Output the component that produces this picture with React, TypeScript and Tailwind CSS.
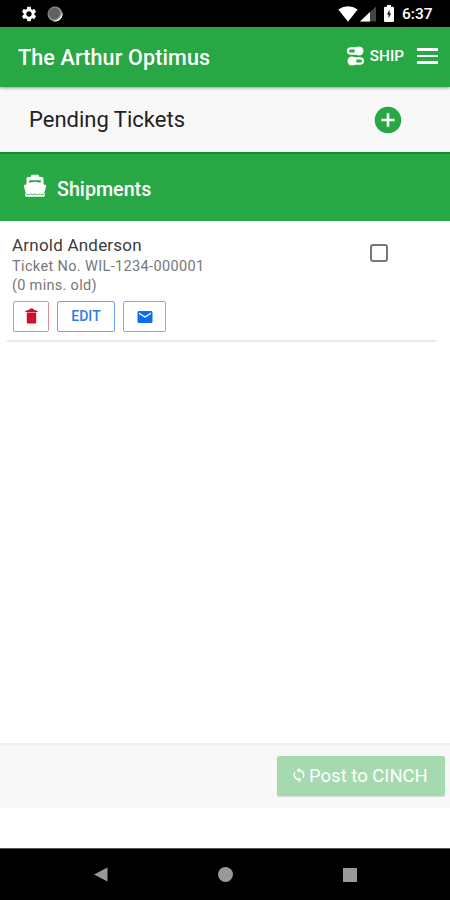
import { useState } from "react";
import { MdAddCircle, MdEmail, MdSettings } from "react-icons/md";

type Ticket = { name: string; number: string; age: string };

const tickets: Ticket[] = [
  { name: "Arnold Anderson", number: "WIL-1234-000001", age: "0 mins. old" },
];

function StatusBar() {
  return (
    <div className="h-[27px] shrink-0 bg-black text-white flex items-center pl-5 pr-[17px]">
      <MdSettings className="size-[18px]" />
      <svg className="size-4 ml-[9px]" viewBox="0 0 16 16">
        <circle cx="8" cy="8" r="7.5" fill="#8a8a8a" />
        <path d="M15.2 6A7.5 7.5 0 0 1 6 15.2Q14 14 15.2 6z" fill="#fff" />
        <circle cx="7.3" cy="7.3" r="5.6" fill="#606060" />
      </svg>
      <svg className="ml-auto w-5 h-4" viewBox="0 0 20 16">
        <path d="M.3 3.6Q10-3.2 19.7 3.6L10 15.8z" fill="#fff" />
      </svg>
      <svg className="w-4 h-4 ml-[2px]" viewBox="0 0 16 16">
        <path d="M0 15.5L16 .5v15z" fill="#444" />
        <path d="M0 15.5L10 6v9.500z" fill="#fff" />
      </svg>
      <svg className="w-[10px] h-[17px] ml-[8px]" viewBox="0 0 10 17">
        <path d="M3 0h4v1.800h1.800q1.200 0 1.200 1.200v12.800q0 1.200-1.200 1.200H1.200Q0 17 0 15.800V3q0-1.200 1.200-1.200H3z" fill="#fff" />
        <path d="M5.500 4.500L3 9.600h1.600v4L7 8.300H5.500z" fill="#111" />
      </svg>
      <span className="ml-[8px] mt-[2px] w-[31px] text-[15.500px] leading-none font-medium whitespace-nowrap">6:37</span>
    </div>
  );
}

function Header() {
  return (
    <header className="h-[60px] shrink-0 bg-[#28a745] text-white flex items-center pl-[18px] pr-3 relative z-10 shadow-[0_1px_3px_rgba(0,0,0,0.4)]">
      <h1 className="text-[21.500px] tracking-[0.150px] font-medium leading-none whitespace-nowrap pt-[2px]">The Arthur Optimus</h1>
      <button className="ml-auto flex items-center -mt-[3px]">
        <svg className="w-[17px] h-[20px]" viewBox="0 0 17 20">
          <rect x="1" y="2.400" width="13" height="5.200" rx="2.600" fill="none" stroke="#fff" strokeWidth="2.200" />
          <circle cx="12" cy="5" r="4.500" fill="#fff" />
          <rect x="3" y="12.400" width="13" height="5.200" rx="2.600" fill="none" stroke="#fff" strokeWidth="2.200" />
          <circle cx="5" cy="15" r="4.500" fill="#fff" />
        </svg>
        <span className="ml-[6px] mt-[3px] text-[15.300px] leading-none font-medium">SHIP</span>
      </button>
      <button className="ml-[13px] -mt-[2px] flex flex-col gap-1" aria-label="Menu">
        <span className="w-[21px] h-[2.500px] bg-white" />
        <span className="w-[21px] h-[2.500px] bg-white" />
        <span className="w-[21px] h-[2.500px] bg-white" />
      </button>
    </header>
  );
}

function BoatIcon() {
  return (
    <svg className="w-6 h-6 -mt-[3px]" viewBox="0 0 24 24">
      <path
        d="M9 .8h6q1 0 1.300 2.200h2.500q1.700 0 1.700 1.700v5.600l2 .8q1 .4.600 1.400l-1.900 6.700q.8.300.8 1.600 0 2-1.500 2h-17Q2 22.800 2 20.800q0-1.300.8-1.600L.9 12.500q-.4-1 .6-1.400l2-.8V4.700Q3.500 3 5.200 3h2.500Q8 .8 9 .8z"
        fill="#fff"
      />
      <path d="M6.200 6.300h11.600v2.500L12 7.800 6.200 8.800z" fill="#28a745" />
      <path d="M3 20.300q2.500 1 4.600-.3 2.200 1.500 4.400 0 2.200 1.500 4.400 0 2.100 1.300 4.600.3" fill="none" stroke="#28a745" strokeWidth=".8" />
    </svg>
  );
}

function TicketRow({ ticket }: { ticket: Ticket }) {
  const [checked, setChecked] = useState(false);
  return (
    <li className="ml-[7px] mr-[14px] pl-[5px] pt-[13px] h-[121px] flex border-b-2 border-[#e8e8e8]">
      <div>
        <p className="text-[17px] tracking-[0.220px] leading-[22px] text-[#3c3c3c]">{ticket.name}</p>
        <p className="text-[14.500px] tracking-[0.360px] leading-5 mt-px text-[#777]">Ticket No. {ticket.number}</p>
        <p className="text-[14.500px] tracking-[0.300px] leading-5 -mt-px text-[#777]">({ticket.age})</p>
        <div className="flex gap-2 mt-[5px] ml-px">
          <button className="w-9 h-[31px] rounded-[2px] border border-[#dc8f99] flex items-center justify-center" aria-label="Delete">
            <svg className="w-[13px] h-4 -mt-px" viewBox="0 0 13 16" fill="#c8102e">
              <path d="M.3 3L4 1.700 5 .5h3l1 1.200L12.700 3v1H.3zM1.800 4.600h9.400v9.600q0 1.300-1.300 1.300H3.100q-1.300 0-1.300-1.300z" />
              <path d="M5 6.500v7M8 6.500v7" stroke="#d02a45" strokeWidth=".7" />
            </svg>
          </button>
          <button className="w-[58px] h-[31px] rounded-[2px] border border-[#6fa3f5] text-[#2e7cf0] text-[14px] font-medium">EDIT</button>
          <button className="w-[43px] h-[31px] rounded-[2px] border border-[#7fabf5] text-[#0b6df0] flex items-center justify-center" aria-label="Email">
            <MdEmail className="size-[18px]" />
          </button>
        </div>
      </div>
      <button
        role="checkbox"
        aria-checked={checked}
        aria-label="Select ticket"
        onClick={() => setChecked(!checked)}
        className={`ml-auto mr-[48px] mt-[10px] size-[18px] rounded-[3px] border-2 border-[#777] ${checked ? "bg-[#28a745]" : "bg-white"}`}
      />
    </li>
  );
}

export default function App() {
  return (
    <div className="w-[450px] h-[900px] flex flex-col bg-white overflow-hidden font-[Roboto,sans-serif]">
      <StatusBar />
      <Header />
      <div className="h-[65px] shrink-0 bg-[#f8f8f8] flex items-center justify-between pl-[29px] pr-[46px]">
        <h2 className="text-[22px] leading-none text-[#222]">Pending Tickets</h2>
        <button aria-label="Add ticket">
          <MdAddCircle className="size-8 text-[#28a745]" />
        </button>
      </div>
      <div className="h-[69px] shrink-0 bg-[#28a745] border-t-2 border-[#188a2c] text-white flex items-center pl-[23px]">
        <BoatIcon />
        <h3 className="ml-[10px] mt-[5px] text-[19.700px] leading-none font-medium">Shipments</h3>
      </div>
      <ul className="flex-1">
        {tickets.map((t) => (
          <TicketRow key={t.number} ticket={t} />
        ))}
      </ul>
      <footer className="h-[65px] shrink-0 bg-[#f8f8f8] border-t-2 border-[#f0f0f0] flex items-center justify-end pr-[5px]">
        <button className="w-[168px] h-[40px] -mt-px rounded-[2px] bg-[#a5d9af] text-white flex items-center pl-[15px] shadow-[0_1px_1px_rgba(0,0,0,0.12)]">
          <svg className="w-[14px] h-[16px] -mt-[2px] shrink-0" viewBox="0 0 14 16" fill="none" stroke="#fff" strokeWidth="1.500">
            <path d="M7 3.300a4.900 4.900 0 0 1 4.100 7.500M7 12.700A4.900 4.900 0 0 1 2.900 5.200" />
            <path d="M7.500 .5v5.600L4.700 3.300zM6.500 9.900v5.600l2.800-2.800z" fill="#fff" stroke="none" />
          </svg>
          <span className="ml-[3px] text-[18.500px] leading-none whitespace-nowrap">Post to CINCH</span>
        </button>
      </footer>
      <div className="h-10 shrink-0" />
      <nav className="h-[52px] shrink-0 bg-black border-t border-[#555] flex items-center justify-between pl-[94px] pr-[93px]">
        <svg className="w-[14px] h-[15px]" viewBox="0 0 14 15">
          <path d="M0 7.500L13.500 .5v14z" fill="#999" />
        </svg>
        <span className="size-[15px] rounded-full bg-[#999]" />
        <span className="size-[14px] bg-[#999]" />
      </nav>
    </div>
  );
}
